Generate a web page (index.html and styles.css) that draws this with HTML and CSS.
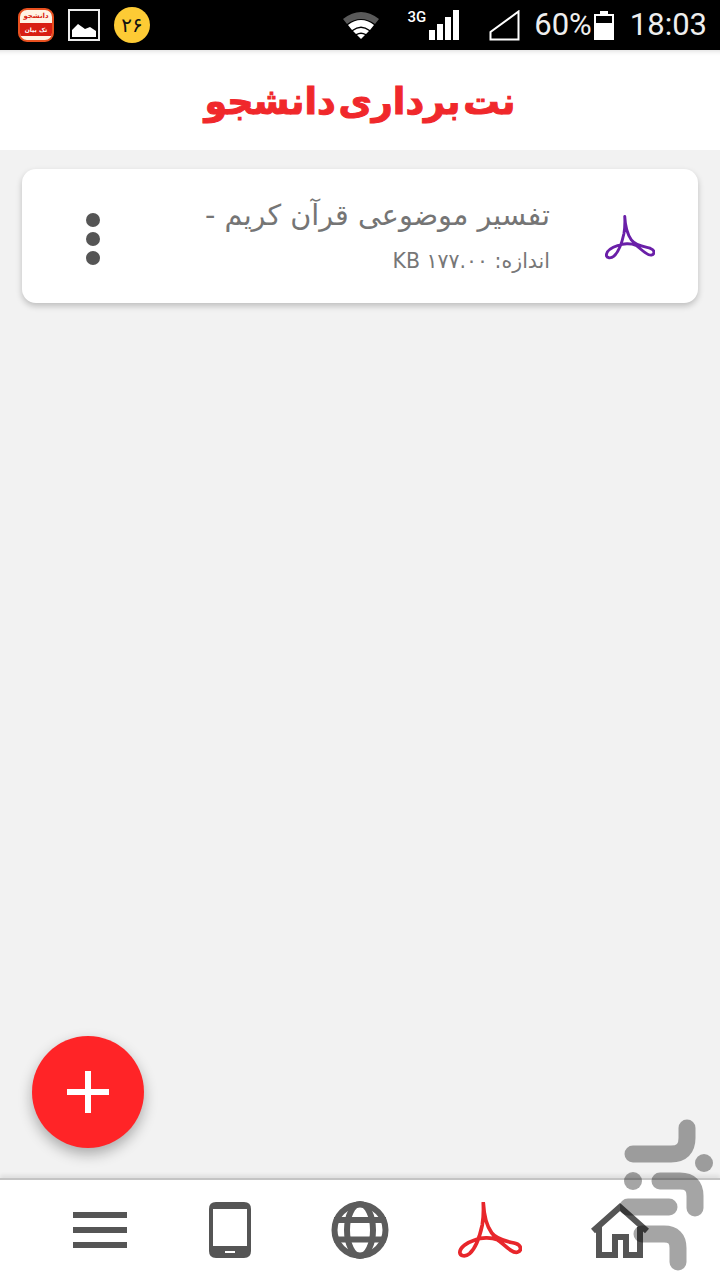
FILE: index.html

```html
<!DOCTYPE html>
<html lang="fa">
<head>
    <meta charset="UTF-8">
    <meta name="viewport" content="width=device-width, initial-scale=1.0">
    <title>نت برداری دانشجو</title>
    <link rel="stylesheet" href="styles.css">
</head>
<body>
    <svg class="defs" width="0" height="0">
        <symbol id="pdf" viewBox="0 0 190 170">
            <path d="M75 3C77 40 84 70 100 92C116 114 150 118 172 124C190 130 190 146 176 150C160 153 135 125 118 113C98 104 68 106 50 113C28 120 6 134 5 150C5 162 22 164 34 154C54 136 66 96 72 68C76 44 76 22 75 3" fill="none" stroke="currentColor" stroke-width="11" stroke-linecap="round" stroke-linejoin="round"/>
        </symbol>
    </svg>

    <div class="statusbar">
        <div class="status-left">
            <div class="app-icon"><span>دانشجو</span><span class="app-icon-low">تک بیان</span></div>
            <svg class="pic-icon" width="32" height="32" viewBox="0 0 32 32">
                <rect x="1" y="1" width="30" height="30" fill="none" stroke="#ececec" stroke-width="2"/>
                <path d="M4 28V21L10 15L17 20L22 18L28 22V28Z" fill="#fff"/>
            </svg>
            <div class="badge">۲۶</div>
        </div>
        <div class="status-right">
            <svg class="wifi" width="38" height="30" viewBox="0 0 38 30">
                <path d="M1 9Q19 -5 37 9L33 14Q19 4 5 14Z" fill="#5a5a5a"/>
                <path d="M6 15Q19 5 32 15L28 20Q19 13 10 20Z" fill="#fff"/>
                <path d="M11 21Q19 15 27 21L24 24Q19 21 14 24Z" fill="#fff"/>
                <path d="M15 25Q19 23 23 25L19 29Z" fill="#fff"/>
            </svg>
            <div class="net">3G</div>
            <div class="signal"><i class="s1"></i><i class="s2"></i><i class="s3"></i><i class="s4"></i></div>
            <svg class="triangle" width="32" height="31" viewBox="0 0 32 31">
                <path d="M1.5 29.5V22L29.5 1.5V29.5Z" fill="none" stroke="#fff" stroke-width="2"/>
            </svg>
            <div class="pct">60%</div>
            <div class="battery"><div class="battery-fill"></div></div>
            <div class="clock">18:03</div>
        </div>
    </div>

    <header class="appbar">
        <h1>نت برداری دانشجو</h1>
    </header>

    <main class="content">
        <div class="card">
            <svg class="card-pdf"><use href="#pdf"/></svg>
            <div class="card-text">
                <div class="card-title">تفسیر موضوعی قرآن کریم -</div>
                <div class="card-size">اندازه: <span dir="ltr">KB ۱۷۷.۰۰</span></div>
            </div>
            <div class="dots"><i></i><i></i><i></i></div>
        </div>
    </main>

    <div class="fab">
        <svg width="42" height="42" viewBox="0 0 42 42"><path d="M18 0h6v18h18v6H24v18h-6V24H0v-6h18z" fill="#fff"/></svg>
    </div>

    <nav class="bottomnav">
        <div class="nav-item">
            <div class="burger"><i></i><i></i><i></i></div>
        </div>
        <div class="nav-item">
            <svg width="42" height="56" viewBox="0 0 42 56">
                <path fill-rule="evenodd" d="M7 0H35Q42 0 42 7V49Q42 56 35 56H7Q0 56 0 49V7Q0 0 7 0ZM4 7V44H38V7ZM16 49V51H26V49Z" fill="#555"/>
            </svg>
        </div>
        <div class="nav-item">
            <svg width="58" height="58" viewBox="0 0 58 58" fill="none" stroke="#5c5c5c" stroke-width="6">
                <circle cx="29" cy="29" r="25.500"/>
                <ellipse cx="29" cy="29" rx="13" ry="26"/>
                <path d="M3 19H55M3 38.500H55"/>
            </svg>
        </div>
        <div class="nav-item">
            <svg class="nav-pdf"><use href="#pdf"/></svg>
        </div>
        <div class="nav-item">
            <svg width="58" height="56" viewBox="0 0 58 56" fill="none" stroke="#555">
                <path d="M2 29L29 5L56 29" stroke-width="6"/>
                <path d="M8 25V53H24V35H35V53H49V25" stroke-width="6"/>
            </svg>
        </div>
    </nav>

    <svg class="watermark" width="100" height="160" viewBox="620 1115 100 160" fill="none" stroke="#000" stroke-width="17" stroke-linecap="round">
        <path d="M687 1128V1138Q687 1154 671 1154H633"/>
        <path d="M660 1181H680Q695 1181 695 1196V1208"/>
        <path d="M628 1207H669"/>
        <path d="M642 1234H664Q678 1234 678 1248V1262"/>
        <circle cx="704" cy="1163" r="9" fill="#000" stroke="none"/>
        <circle cx="633" cy="1181" r="9" fill="#000" stroke="none"/>
    </svg>
</body>
</html>
```

FILE: styles.css

```css
* {
    box-sizing: border-box;
}
body {
    margin: 0;
    width: 720px;
    height: 1280px;
    position: relative;
    overflow: hidden;
    display: flex;
    flex-direction: column;
    background-color: #f2f2f2;
    font-family: "DejaVu Sans", sans-serif;
}
.defs {
    position: absolute;
}
.statusbar {
    height: 50px;
    background-color: #000;
    display: flex;
    justify-content: space-between;
    align-items: center;
    padding: 0 13px 0 18px;
    color: #eee;
    flex-shrink: 0;
}
.status-left {
    display: flex;
    align-items: center;
    gap: 14px;
}
.status-right {
    display: flex;
    align-items: center;
}
.app-icon {
    width: 36px;
    height: 34px;
    border-radius: 9px;
    border: 2px solid #e8501f;
    background-color: #fff3e4;
    color: #d81e12;
    font-size: 7px;
    font-weight: bold;
    line-height: 13px;
    text-align: center;
    overflow: hidden;
    white-space: nowrap;
    direction: rtl;
}
.app-icon span {
    display: block;
}
.app-icon-low {
    background-color: #d81e12;
    color: #fff;
    line-height: 13px;
    font-size: 6px;
}
.badge {
    width: 36px;
    height: 36px;
    border-radius: 50%;
    background-color: #fdcb35;
    color: #111;
    font-size: 20px;
    line-height: 36px;
    text-align: center;
}
.wifi {
    margin-right: 27px;
}
.net {
    font-family: Roboto, sans-serif;
    font-size: 15px;
    font-weight: 500;
    align-self: flex-start;
    margin-top: 8px;
    margin-right: 3px;
    color: #fff;
}
.signal {
    display: flex;
    align-items: flex-end;
    gap: 2px;
    height: 30px;
    margin-right: 30px;
}
.signal i {
    width: 6px;
    background-color: #fff;
}
.s1 { height: 10px; }
.s2 { height: 16px; }
.s3 { height: 23px; }
.s4 { height: 30px; }
.triangle {
    margin-right: 13px;
}
.pct, .clock {
    font-family: Roboto, sans-serif;
    font-size: 31px;
    color: #eee;
    line-height: 50px;
}
.battery {
    width: 20px;
    height: 26px;
    margin: 3px 16px 0 2px;
    border: 2px solid #fff;
    position: relative;
    display: flex;
    align-items: flex-end;
}
.battery::before {
    content: "";
    position: absolute;
    top: -5px;
    left: 4px;
    width: 8px;
    height: 3px;
    background-color: #fff;
}
.battery-fill {
    width: 100%;
    height: 65%;
    background-color: #fff;
}
.appbar {
    height: 100px;
    background-color: #fff;
    display: flex;
    justify-content: center;
    align-items: center;
    box-shadow: inset 0 6px 5px -5px rgba(0, 0, 0, 0.15);
    flex-shrink: 0;
}
h1 {
    margin: 0 0 -3px;
    color: #f0282b;
    font-size: 36.500px;
    font-weight: bold;
    word-spacing: -10px;
    direction: rtl;
    -webkit-text-stroke: 1px #f0282b;
}
.content {
    flex: 1;
    padding: 19px 22px;
}
.card {
    height: 134px;
    background-color: #fff;
    border-radius: 14px;
    box-shadow: 0 3px 6px rgba(0, 0, 0, 0.22);
    display: flex;
    align-items: center;
    direction: rtl;
    padding: 0 43px 0 64px;
}
.card-pdf {
    width: 50px;
    height: 46px;
    color: #6a1fa8;
    margin-left: 55px;
    margin-top: 3px;
    flex-shrink: 0;
}
.card-text {
    flex: 1;
}
.card-title {
    font-size: 28.700px;
    line-height: 40px;
    margin-top: -1px;
    color: #757575;
}
.card-size {
    font-size: 20.500px;
    line-height: 30px;
    margin-top: 11px;
    color: #777;
}
.dots {
    display: flex;
    flex-direction: column;
    gap: 5px;
    margin-top: 6px;
}
.dots i {
    width: 14px;
    height: 14px;
    border-radius: 50%;
    background-color: #555;
}
.fab {
    position: absolute;
    left: 32px;
    top: 1036px;
    width: 112px;
    height: 112px;
    border-radius: 50%;
    background-color: #ff2427;
    box-shadow: 0 6px 14px rgba(0, 0, 0, 0.3);
    display: flex;
    justify-content: center;
    align-items: center;
}
.bottomnav {
    height: 102px;
    background-color: #fff;
    border-top: 2px solid #c4c4c4;
    box-shadow: 0 -3px 4px rgba(0, 0, 0, 0.08);
    display: grid;
    grid-template-columns: repeat(5, 130px);
    padding: 0 35px;
    flex-shrink: 0;
}
.nav-item {
    display: flex;
    justify-content: center;
    align-items: center;
}
.burger {
    width: 54px;
    display: flex;
    flex-direction: column;
    gap: 9px;
}
.burger i {
    height: 6px;
    background-color: #555;
}
.nav-pdf {
    width: 64px;
    height: 57px;
    color: #e8262b;
}
.watermark {
    position: absolute;
    left: 620px;
    top: 1115px;
    opacity: 0.35;
}
```
